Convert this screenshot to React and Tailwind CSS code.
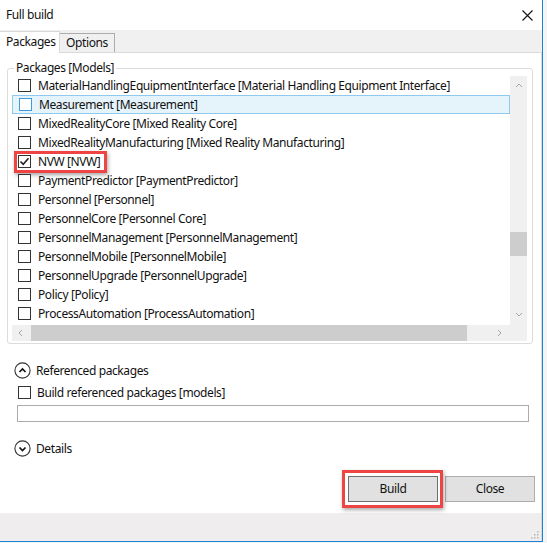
const packages = [
  "MaterialHandlingEquipmentInterface [Material Handling Equipment Interface]",
  "Measurement [Measurement]",
  "MixedRealityCore [Mixed Reality Core]",
  "MixedRealityManufacturing [Mixed Reality Manufacturing]",
  "NVW [NVW]",
  "PaymentPredictor [PaymentPredictor]",
  "Personnel [Personnel]",
  "PersonnelCore [Personnel Core]",
  "PersonnelManagement [PersonnelManagement]",
  "PersonnelMobile [PersonnelMobile]",
  "PersonnelUpgrade [PersonnelUpgrade]",
  "Policy [Policy]",
  "ProcessAutomation [ProcessAutomation]",
];

function Checkbox({ checked, hover }) {
  return (
    <span
      className={`w-[13px] h-[13px] shrink-0 border flex items-center justify-center ${
        hover ? "border-[#3d9be0] bg-white" : "border-[#333333] bg-white"
      }`}
    >
      {checked && (
        <svg width="11" height="11" viewBox="0 0 11 11">
          <path d="M1.5 5.5 L4.2 8.3 L9.5 2.2" fill="none" stroke="#222" strokeWidth="1.6" />
        </svg>
      )}
    </span>
  );
}

function Chevron({ dir }) {
  const d = {
    up: "M1 5 L4 2 L7 5",
    down: "M1 2 L4 5 L7 2",
    left: "M5 1 L2 4 L5 7",
    right: "M2 1 L5 4 L2 7",
  }[dir];
  return (
    <svg width="8" height="8" viewBox="0 0 8 8">
      <path d={d} fill="none" stroke="#a6a6a6" strokeWidth="1" />
    </svg>
  );
}

function Expander({ up }) {
  return (
    <svg width="17" height="17" viewBox="0 0 17 17" className="shrink-0">
      <circle cx="8.5" cy="8.5" r="7.6" fill="white" stroke="#333" strokeWidth="1.1" />
      <path
        d={up ? "M5.5 10 L8.5 7 L11.5 10" : "M5.5 7.5 L8.5 10.5 L11.5 7.5"}
        fill="none"
        stroke="#111"
        strokeWidth="1.7"
      />
    </svg>
  );
}

export default function App() {
  return (
    <div className="w-[547px] h-[543px] bg-[#f4f4f4] overflow-hidden font-['Segoe_UI','Noto_Sans',sans-serif] text-[12px] tracking-[-0.4px] text-[#111]">
      <div className="w-[543px] h-[542px] bg-white border-r border-b border-[#1883d7] flex flex-col">
        {/* title bar */}
        <div className="h-[30px] flex items-center justify-between pl-[6px] pr-[9px] shrink-0">
          <span className="text-[12px]">Full build</span>
          <svg width="11" height="11" viewBox="0 0 11 11">
            <path d="M0.5 0.5 L10.5 10.5 M10.5 0.5 L0.5 10.5" stroke="#111" strokeWidth="1.1" />
          </svg>
        </div>

        {/* tabs */}
        <div className="h-[22px] bg-[#f0f0f0] flex items-end shrink-0 relative">
          <div className="h-[22px] w-[60px] bg-white border-t border-r border-[#d9d9d9] flex items-center pl-[6px] relative z-10 -mb-px pb-px">
            Packages
          </div>
          <div className="h-[19px] w-[55px] bg-[#f0f0f0] border border-l-0 border-b-0 border-[#acacac] flex items-center justify-center">
            Options
          </div>
        </div>

        {/* panel */}
        <div className="flex-1 border-t border-r border-[#d9d9d9] flex flex-col">
          <div className="mt-[15px] ml-[7px] w-[526px] h-[276px] border border-[#dcdcdc] rounded-[3px] relative pl-[4px] pt-[7px]">
            <span className="absolute left-[6px] top-[-9px] bg-white px-[2px] leading-[16px]">
              Packages [Models]
            </span>
            <div className="grid grid-cols-[498px_17px] grid-rows-[249px_16px]">
              <div className="overflow-hidden">
                {packages.map((p, i) => (
                  <div
                    key={p}
                    className={`h-[19px] flex items-center gap-[7px] pl-[6px] whitespace-nowrap relative ${
                      i === 1 ? "bg-[#e5f3fb] border border-[#8fcaee] pl-[5px]" : ""
                    }`}
                  >
                    <Checkbox checked={i === 4} hover={i === 1} />
                    <span>{p}</span>
                    {i === 4 && (
                      <span className="absolute left-[2px] top-[-1px] w-[93px] h-[22px] border-[3px] border-[#ee4444] shadow-[1px_2px_4px_rgba(0,0,0,0.35)]" />
                    )}
                  </div>
                ))}
              </div>
              <div className="bg-[#f0f0f0] flex flex-col items-center py-[6px]">
                <Chevron dir="up" />
                <div className="w-[17px] h-[24px] bg-[#cdcdcd] mt-[142px]" />
                <div className="flex-1" />
                <Chevron dir="down" />
              </div>
              <div className="bg-[#f0f0f0] flex items-center pl-[5px] pr-[6px] gap-[6px]">
                <Chevron dir="left" />
                <div className="w-[436px] h-[16px] bg-[#cdcdcd]" />
                <div className="flex-1" />
                <Chevron dir="right" />
              </div>
              <div className="bg-[#f0f0f0]" />
            </div>
          </div>

          <div className="mt-[18px] ml-[14px] flex items-center gap-[5px] h-[17px]">
            <Expander up />
            <span>Referenced packages</span>
          </div>
          <div className="mt-[5px] ml-[18px] flex items-center gap-[6px] h-[17px]">
            <Checkbox />
            <span>Build referenced packages [models]</span>
          </div>
          <div className="mt-[4px] ml-[17px] w-[512px] h-[17px] border border-[#ababab] bg-white" />

          <div className="mt-[18px] ml-[14px] flex items-center gap-[5px] h-[17px]">
            <Expander />
            <span>Details</span>
          </div>

          <div className="mt-[19px] flex justify-end gap-[7px] pr-[6px]">
            <div className="relative">
              <button className="w-[90px] h-[26px] bg-[#e1e1e1] border border-[#6f6f6f] flex items-center justify-center">
                Build
              </button>
              <span className="absolute left-[-6px] top-[-6px] w-[101px] h-[38px] border-[3px] border-[#ee4444] shadow-[1px_2px_4px_rgba(0,0,0,0.35)]" />
            </div>
            <button className="w-[90px] h-[26px] bg-[#e1e1e1] border border-[#adadad] flex items-center justify-center">
              Close
            </button>
          </div>

          <div className="flex-1" />
          <div className="h-[28px] bg-[#efeded] flex items-end justify-end p-[2px]">
            <svg width="10" height="10" viewBox="0 0 10 10">
              {[
                [8, 2],
                [8, 5],
                [5, 5],
                [8, 8],
                [5, 8],
                [2, 8],
              ].map(([x, y]) => (
                <rect key={`${x}-${y}`} x={x} y={y} width="1.5" height="1.5" fill="#b8b8b8" />
              ))}
            </svg>
          </div>
        </div>
      </div>
    </div>
  );
}
